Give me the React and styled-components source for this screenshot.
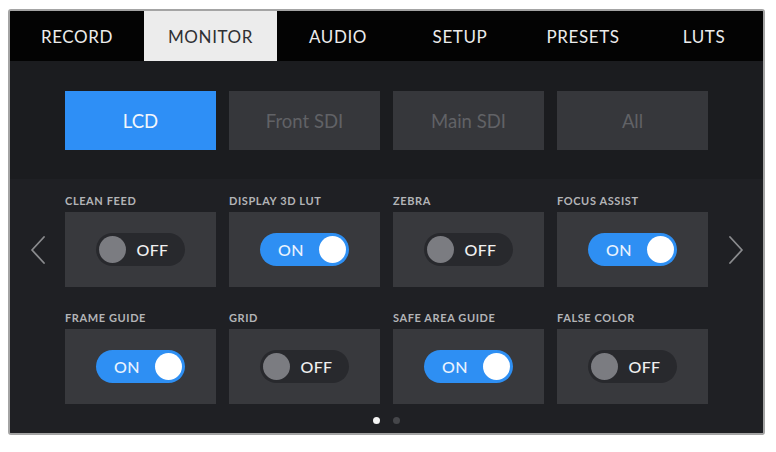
import React from 'react';
import styled, { createGlobalStyle } from 'styled-components';

const GlobalStyle = createGlobalStyle`
  html, body {
    margin: 0;
    padding: 0;
    background: #ffffff;
  }
  body {
    font-family: Lato, "Open Sans", "Liberation Sans", sans-serif;
  }
`;

const Page = styled.div`
  padding: 9px 0 0 8px;
  width: 776px;
  height: 452px;
  box-sizing: border-box;
`;

const Screen = styled.div`
  width: 757px;
  height: 426px;
  box-sizing: border-box;
  border: 2px solid #a4a4a4;
  border-radius: 3px;
  background: #1f2024;
  display: flex;
  flex-direction: column;
  overflow: hidden;
`;

const TabBar = styled.div`
  display: flex;
  height: 50px;
  background: #030303;
`;

const Tab = styled.div`
  flex: 0 0 ${props => props.w}px;
  display: flex;
  align-items: center;
  justify-content: center;
  font-size: 17px;
  letter-spacing: 0.6px;
  text-transform: uppercase;
  color: ${props => (props.active ? '#2f3033' : '#ececec')};
  background: ${props => (props.active ? '#ececec' : 'transparent')};
`;

const OutputSection = styled.div`
  height: 118px;
  box-sizing: border-box;
  padding: 30px 55px 0;
  background: #1b1c1f;
  display: grid;
  grid-template-columns: repeat(4, 151px);
  column-gap: 13px;
  align-content: start;
`;

const OutputButton = styled.div`
  height: 59px;
  display: flex;
  align-items: center;
  justify-content: center;
  font-size: 18.5px;
  color: ${props => (props.active ? '#f2f6fb' : '#616266')};
  background: ${props => (props.active ? '#2e8ff6' : '#36373b')};
`;

const SettingsSection = styled.div`
  flex: 1;
  padding-top: 16px;
  display: flex;
  flex-direction: column;
  background: #1f2024;
`;

const SettingsRow = styled.div`
  display: flex;
`;

const SideColumn = styled.div`
  flex: 0 0 55px;
  height: 75px;
  margin-top: 17px;
  display: flex;
  align-items: center;
  justify-content: center;
`;

const SettingsGrid = styled.div`
  display: grid;
  grid-template-columns: repeat(4, 151px);
  column-gap: 13px;
  row-gap: 25px;
`;

const Setting = styled.div`
  display: flex;
  flex-direction: column;
`;

const Label = styled.div`
  font-size: 11px;
  line-height: 12px;
  font-weight: 700;
  letter-spacing: 0.6px;
  color: #b3b4b7;
  margin-bottom: 5px;
  text-transform: uppercase;
  white-space: nowrap;
`;

const Card = styled.div`
  height: 75px;
  background: #38393d;
  display: flex;
  align-items: center;
  justify-content: center;
`;

const Pill = styled.div`
  width: 89px;
  height: 33px;
  box-sizing: border-box;
  border-radius: 17px;
  display: flex;
  align-items: center;
  flex-direction: ${props => (props.on ? 'row' : 'row-reverse')};
  padding: ${props => (props.on ? '0 3px 0 3px' : '0 6px 0 3px')};
  background: ${props => (props.on ? '#2e8ff3' : '#28292d')};
`;

const PillText = styled.span`
  flex: 1;
  text-align: center;
  font-size: 16px;
  font-weight: 500;
  letter-spacing: 0.4px;
  color: ${props => (props.on ? '#eaf3fe' : '#f0f0f0')};
`;

const Knob = styled.span`
  width: 27px;
  height: 27px;
  border-radius: 50%;
  background: ${props => (props.on ? '#ffffff' : '#7b7c81')};
`;

const Dots = styled.div`
  display: flex;
  justify-content: center;
  gap: 13px;
  margin-top: 13px;
`;

const Dot = styled.span`
  width: 7px;
  height: 7px;
  border-radius: 50%;
  background: ${props => (props.active ? '#f4f4f4' : '#45464a')};
`;

const Chevron = ({ dir }) => (
  <svg width="16" height="28" viewBox="0 0 16 28">
    <polyline
      points={dir === 'left' ? '14,1 2,14 14,27' : '2,1 14,14 2,27'}
      fill="none"
      stroke="#8a8b8e"
      strokeWidth="1.8"
      strokeLinecap="round"
      strokeLinejoin="round"
    />
  </svg>
);

const Toggle = ({ on }) => (
  <Pill on={on}>
    <PillText on={on}>{on ? 'ON' : 'OFF'}</PillText>
    <Knob on={on} />
  </Pill>
);

const tabs = [
  { name: 'Record', w: 134 },
  { name: 'Monitor', w: 133, active: true },
  { name: 'Audio', w: 122 },
  { name: 'Setup', w: 122 },
  { name: 'Presets', w: 124 },
  { name: 'LUTs', w: 118 }
];

const outputs = ['LCD', 'Front SDI', 'Main SDI', 'All'];

const settings = [
  { label: 'Clean Feed', on: false },
  { label: 'Display 3D LUT', on: true },
  { label: 'Zebra', on: false },
  { label: 'Focus Assist', on: true },
  { label: 'Frame Guide', on: true },
  { label: 'Grid', on: false },
  { label: 'Safe Area Guide', on: true },
  { label: 'False Color', on: false }
];

export default function App() {
  return (
    <Page>
      <GlobalStyle />
      <Screen>
        <TabBar>
          {tabs.map(t => (
            <Tab key={t.name} w={t.w} active={t.active}>
              {t.name === 'LUTs' ? 'LUTS' : t.name}
            </Tab>
          ))}
        </TabBar>
        <OutputSection>
          {outputs.map((o, i) => (
            <OutputButton key={o} active={i === 0}>{o}</OutputButton>
          ))}
        </OutputSection>
        <SettingsSection>
          <SettingsRow>
            <SideColumn>
              <Chevron dir="left" />
            </SideColumn>
            <SettingsGrid>
              {settings.map(s => (
                <Setting key={s.label}>
                  <Label>{s.label}</Label>
                  <Card>
                    <Toggle on={s.on} />
                  </Card>
                </Setting>
              ))}
            </SettingsGrid>
            <SideColumn>
              <Chevron dir="right" />
            </SideColumn>
          </SettingsRow>
          <Dots>
            <Dot active />
            <Dot />
          </Dots>
        </SettingsSection>
      </Screen>
    </Page>
  );
}
